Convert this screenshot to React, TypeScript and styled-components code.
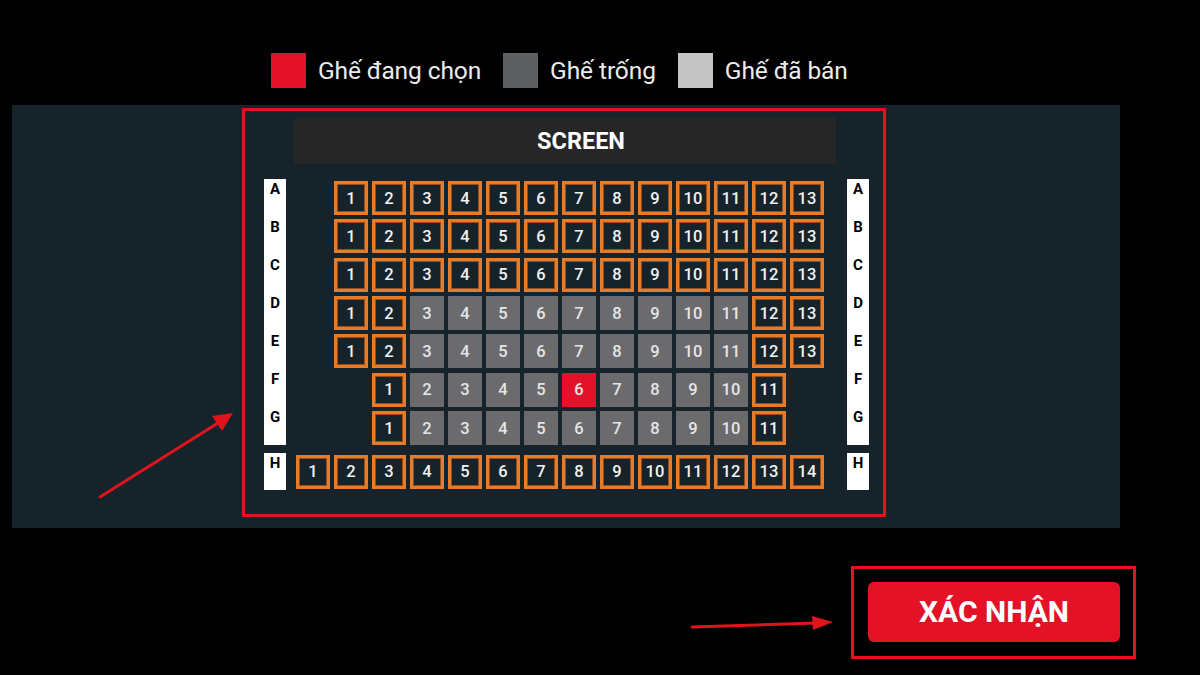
import React from "react";
import styled, { createGlobalStyle } from "styled-components";

const Global = createGlobalStyle`
  html, body { margin: 0; padding: 0; background: #000; }
  body { font-family: Roboto, "Noto Sans", "Liberation Sans", sans-serif; width: 1200px; height: 675px; overflow: hidden; }
`;

const Page = styled.div`
  position: relative;
  width: 1200px;
  height: 675px;
  background: #000;
  padding-top: 52px;
  box-sizing: border-box;
`;

const Legend = styled.div`
  display: flex;
  align-items: center;
  padding-left: 271px;
  height: 36px;
`;

const LegendItem = styled.div`
  display: flex;
  align-items: center;
  margin-right: 22px;
`;

const Swatch = styled.div<{ $c: string }>`
  width: 35px;
  height: 35px;
  background: ${(p) => p.$c};
  margin-right: 12px;
`;

const LegendText = styled.span`
  color: #ececec;
  font-size: 24.5px;
  letter-spacing: -0.1px;
`;

const Panel = styled.div`
  margin: 17px 0 0 12px;
  width: 1108px;
  height: 423px;
  background: #17232b;
  padding: 3px 0 0 230px;
  box-sizing: border-box;
`;

const Frame = styled.div`
  width: 644px;
  height: 409px;
  border: 3px solid #e4121f;
  box-sizing: border-box;
  padding: 7px 14px 0 19px;
`;

const Screen = styled.div`
  margin-left: 30px;
  width: 542px;
  height: 46px;
  background: #262626;
  color: #fff;
  font-weight: 700;
  font-size: 23.5px;
  display: flex;
  align-items: center;
  justify-content: center;
  padding-left: 32px;
  box-sizing: border-box;
`;

const SeatArea = styled.div`
  margin-top: 15px;
  display: grid;
  grid-template-columns: 30px repeat(14, 38px) 43px;
  grid-template-rows: repeat(7, 38.33px) 6px 37px;
`;

const LabelBlock = styled.div<{ $row: string; $side: "l" | "r"; $h: number }>`
  grid-row: ${(p) => p.$row};
  grid-column: ${(p) => (p.$side === "l" ? "1" : "16")};
  justify-self: ${(p) => (p.$side === "l" ? "start" : "end")};
  align-self: start;
  width: 22px;
  height: ${(p) => p.$h}px;
  background: #fff;
  display: flex;
  flex-direction: column;
`;

const LabelLetter = styled.div<{ $h: number }>`
  height: ${(p) => p.$h}px;
  color: #000;
  font-weight: 700;
  font-size: 15px;
  text-align: center;
  padding-top: 3px;
  box-sizing: border-box;
  line-height: 15px;
`;

type Kind = "avail" | "empty" | "chosen";

const Seat = styled.div<{ $kind: Kind; $r: number; $c: number }>`
  grid-row: ${(p) => p.$r};
  grid-column: ${(p) => p.$c};
  justify-self: center;
  align-self: center;
  width: 34px;
  height: 34px;
  box-sizing: border-box;
  display: flex;
  align-items: center;
  justify-content: center;
  font-size: 16.5px;
  font-weight: 500;
  background: ${(p) =>
    p.$kind === "avail" ? "#17232b" : p.$kind === "chosen" ? "#e3122a" : "#6b6b6d"};
  color: ${(p) => (p.$kind === "avail" ? "#f2f2f2" : "#e6e6e6")};
  border: ${(p) => (p.$kind === "avail" ? "3px solid #e57c2a" : "none")};
  box-shadow: ${(p) => (p.$kind === "avail" ? "inset 0 0 0 1px #9a4c16" : "none")};
`;

const Bottom = styled.div`
  display: flex;
  justify-content: flex-end;
  padding: 38px 64px 0 0;
`;

const ButtonFrame = styled.div`
  width: 285px;
  height: 93px;
  border: 3px solid #e4121f;
  box-sizing: border-box;
  padding: 13px 0 0 14px;
`;

const ConfirmButton = styled.button`
  width: 252px;
  height: 60px;
  border: none;
  border-radius: 6px;
  background: #e31227;
  color: #fff;
  font-family: Roboto, "Noto Sans", sans-serif;
  font-weight: 700;
  font-size: 30px;
  display: flex;
  align-items: center;
  justify-content: center;
  padding: 0 0 2px;
`;

const Arrows = styled.svg`
  position: absolute;
  left: 0;
  top: 0;
  pointer-events: none;
`;

type SeatDef = { n: number; col: number; kind: Kind };

function buildRows(): SeatDef[][] {
  const rows: SeatDef[][] = [];
  for (let r = 0; r < 3; r++) {
    rows.push(Array.from({ length: 13 }, (_, i) => ({ n: i + 1, col: i + 3, kind: "avail" as Kind })));
  }
  for (let r = 0; r < 2; r++) {
    rows.push(
      Array.from({ length: 13 }, (_, i) => ({
        n: i + 1,
        col: i + 3,
        kind: (i + 1 <= 2 || i + 1 >= 12 ? "avail" : "empty") as Kind,
      }))
    );
  }
  for (let r = 0; r < 2; r++) {
    rows.push(
      Array.from({ length: 11 }, (_, i) => ({
        n: i + 1,
        col: i + 4,
        kind: (i + 1 === 1 || i + 1 === 11 ? "avail" : r === 0 && i + 1 === 6 ? "chosen" : "empty") as Kind,
      }))
    );
  }
  rows.push(Array.from({ length: 14 }, (_, i) => ({ n: i + 1, col: i + 2, kind: "avail" as Kind })));
  return rows;
}

const ROWS = buildRows();
const LETTERS = ["A", "B", "C", "D", "E", "F", "G"];

function Labels({ side }: { side: "l" | "r" }) {
  return (
    <>
      <LabelBlock $row="1 / 8" $side={side} $h={266}>
        {LETTERS.map((l) => (
          <LabelLetter key={l} $h={38.33}>
            {l}
          </LabelLetter>
        ))}
      </LabelBlock>
      <LabelBlock $row="9" $side={side} $h={37}>
        <LabelLetter $h={37}>H</LabelLetter>
      </LabelBlock>
    </>
  );
}

export default function App() {
  return (
    <Page>
      <Global />
      <Legend>
        <LegendItem>
          <Swatch $c="#e3122a" />
          <LegendText>Ghế đang chọn</LegendText>
        </LegendItem>
        <LegendItem>
          <Swatch $c="#5e5f63" />
          <LegendText>Ghế trống</LegendText>
        </LegendItem>
        <LegendItem>
          <Swatch $c="#c4c4c4" />
          <LegendText>Ghế đã bán</LegendText>
        </LegendItem>
      </Legend>
      <Panel>
        <Frame>
          <Screen>SCREEN</Screen>
          <SeatArea>
            <Labels side="l" />
            {ROWS.map((row, ri) =>
              row.map((s) => (
                <Seat key={`${ri}-${s.n}`} $kind={s.kind} $r={ri === 7 ? 9 : ri + 1} $c={s.col}>
                  {s.n}
                </Seat>
              ))
            )}
            <Labels side="r" />
          </SeatArea>
        </Frame>
      </Panel>
      <Bottom>
        <ButtonFrame>
          <ConfirmButton>XÁC NHẬN</ConfirmButton>
        </ButtonFrame>
      </Bottom>
      <Arrows width="1200" height="675" viewBox="0 0 1200 675">
        <line x1="100" y1="497" x2="218" y2="423" stroke="#e0141c" strokeWidth="3" strokeLinecap="round" />
        <polygon points="233,413 212,416 222,431" fill="#e0141c" />
        <line x1="692" y1="627" x2="816" y2="623" stroke="#e0141c" strokeWidth="3" strokeLinecap="round" />
        <polygon points="833,622 812,616 813,630" fill="#e0141c" />
      </Arrows>
    </Page>
  );
}
